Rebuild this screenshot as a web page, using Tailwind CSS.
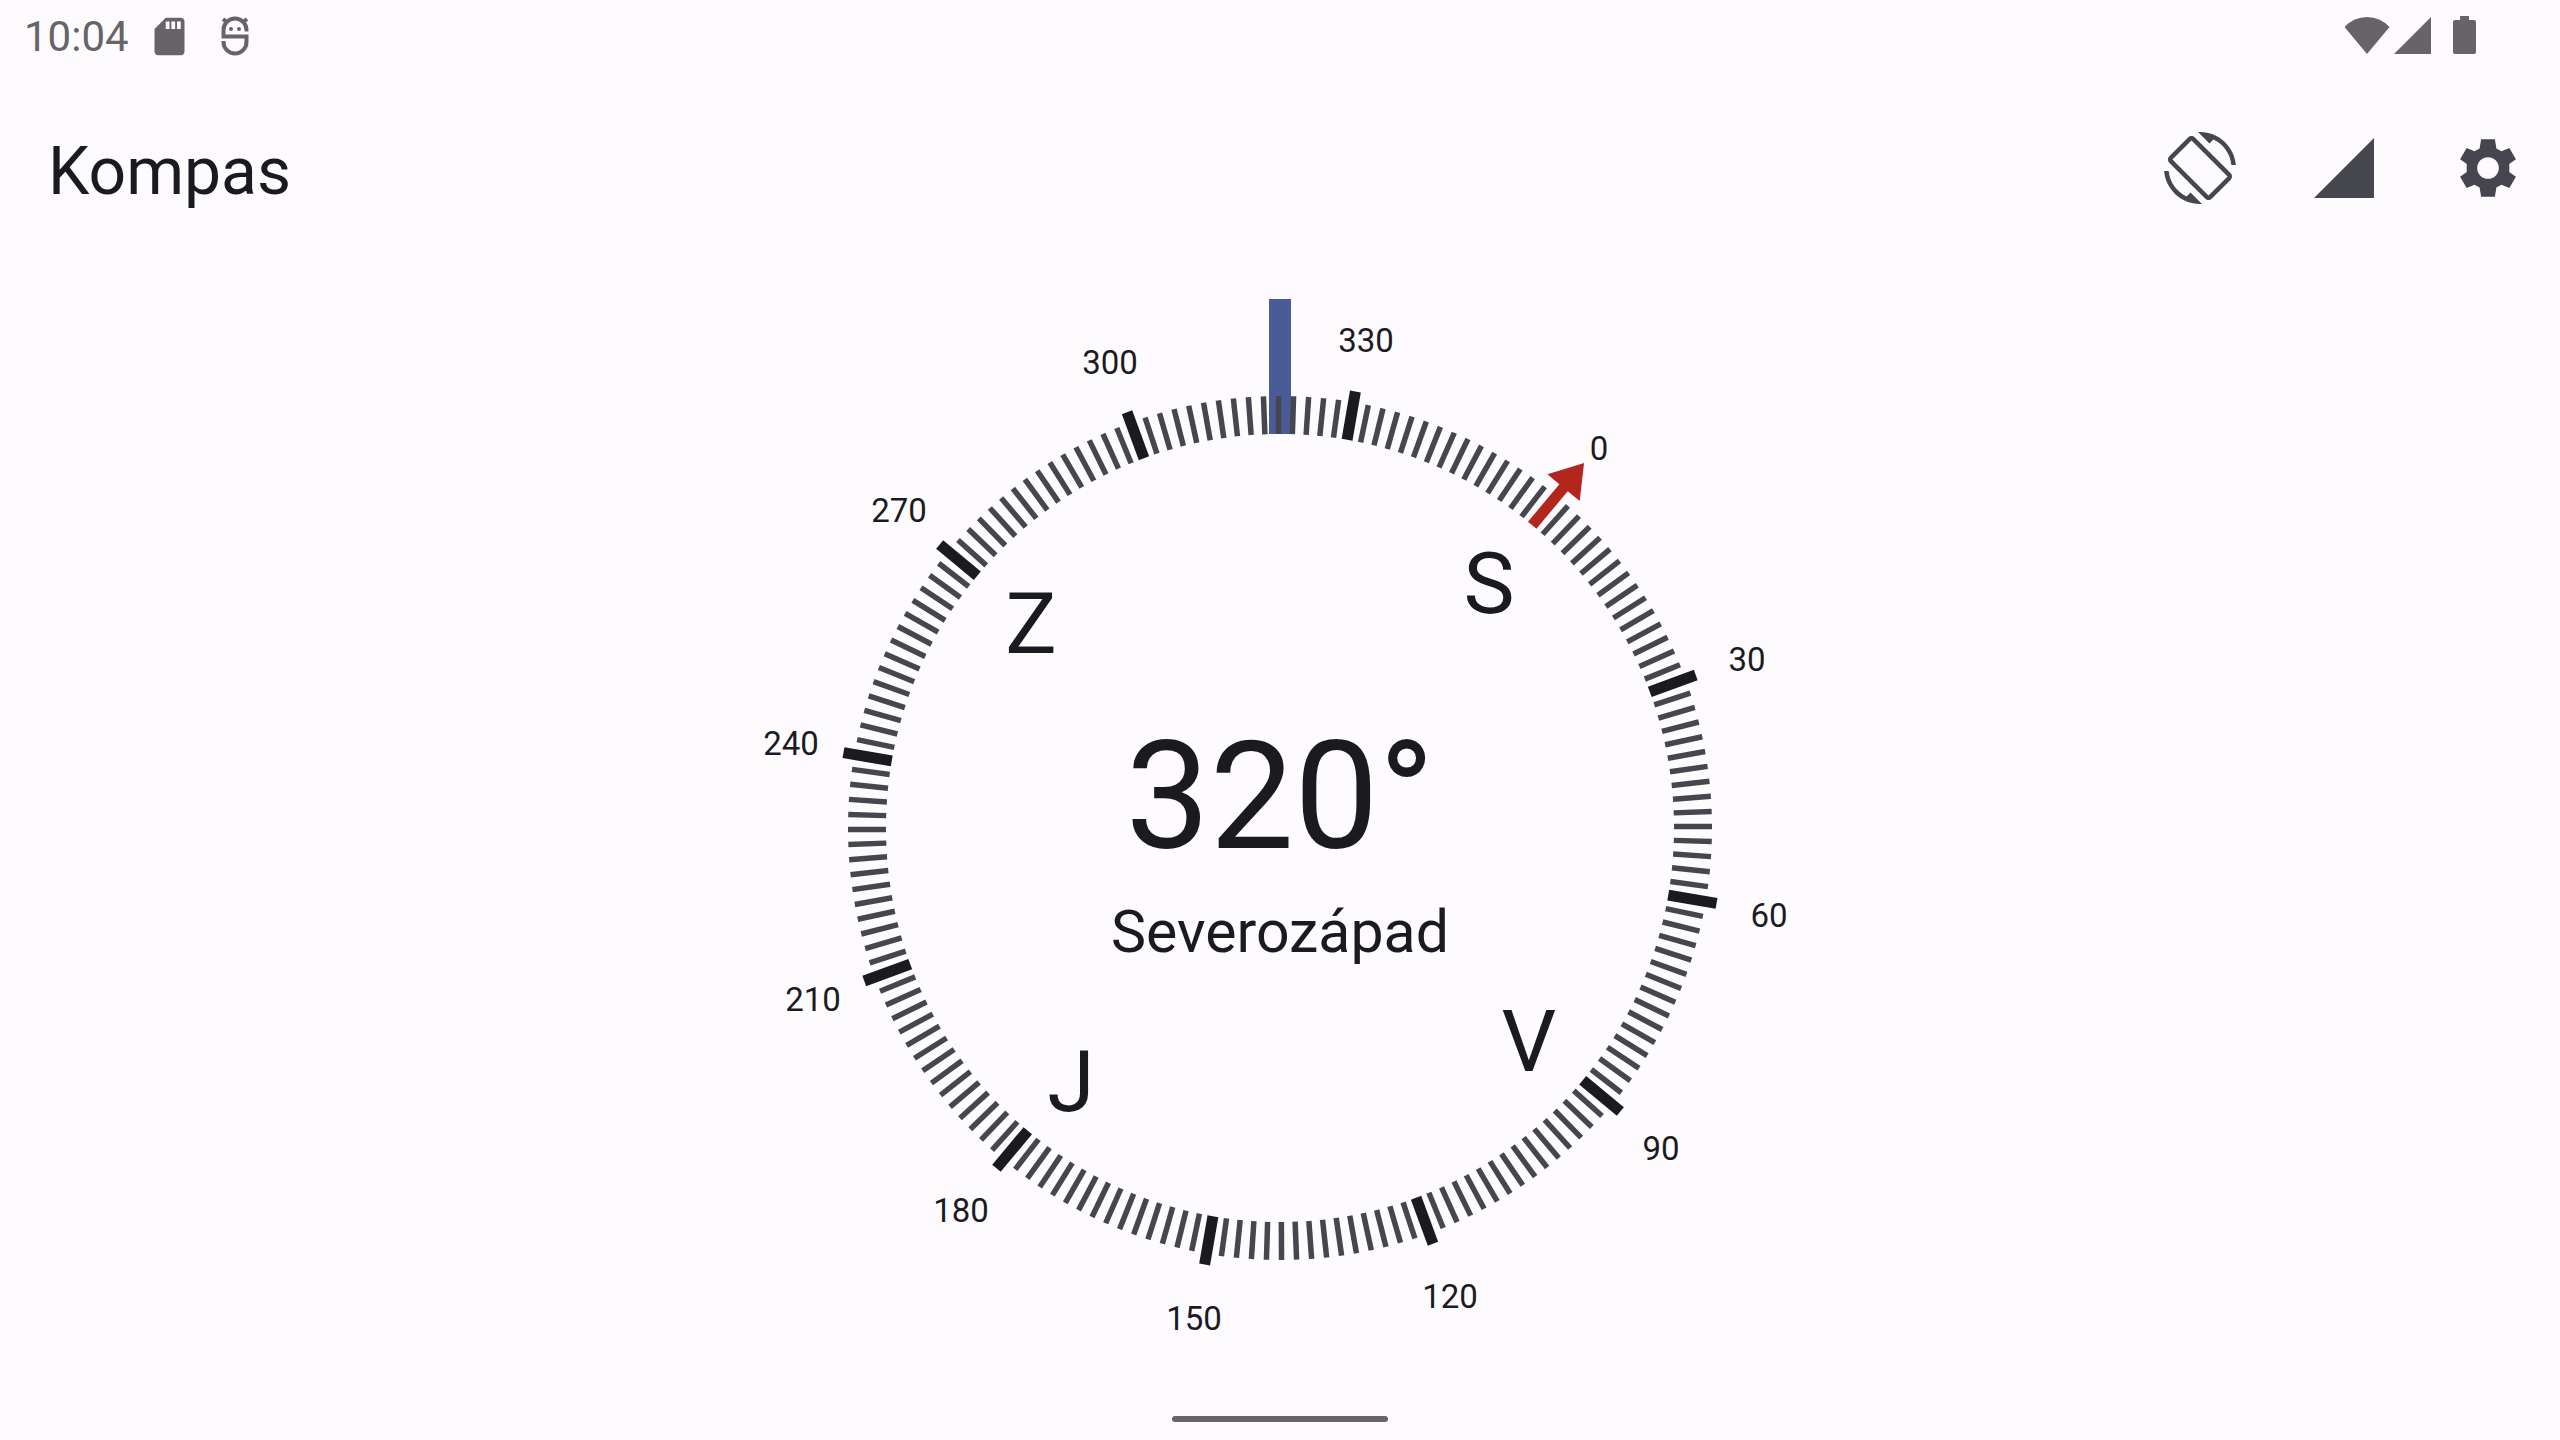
<!DOCTYPE html>
<html lang="cs">
<head>
<meta charset="utf-8">
<meta name="viewport" content="width=device-width, initial-scale=1">
<title>Kompas</title>
<script src="https://cdn.jsdelivr.net/npm/@tailwindcss/browser@4"></script>
</head>
<body class="flex min-h-screen flex-col bg-[#fefbff] font-[Roboto,sans-serif] text-[#1b1b1f]">
  <div class="flex h-[72px] items-center justify-between pr-20 pl-6 text-[#666468]">
    <div class="flex items-center">
      <time class="pt-[2px] text-[42px] leading-[72px]">10:04</time>
      <svg class="ml-[18px] size-[45px]" viewBox="0 0 24 24" fill="currentColor" aria-hidden="true"><path d="M18 2h-8L4.02 8 4 20c0 1.100.9 2 2 2h12c1.100 0 2-.9 2-2V4c0-1.100-.9-2-2-2zm-6 6h-2V4h2v4zm3 0h-2V4h2v4zm3 0h-2V4h2v4z"/></svg>
      <svg class="ml-[29px] h-[40px] w-[28px]" viewBox="0 0 28 40" fill="none" stroke="currentColor" stroke-width="4" aria-hidden="true"><path d="M25.500 15.500V14a11.500 11.500 0 0 0-23 0v6.500h23V26a11.500 11.500 0 0 1-23 0v-1M2 3l5 4M26 3l-5 4"/><circle cx="10" cy="13" r="2" fill="currentColor" stroke="none"/><circle cx="18" cy="13" r="2" fill="currentColor" stroke="none"/></svg>
    </div>
    <div class="flex items-center">
      <svg class="h-10 w-[46px]" viewBox="0 0 46 40" fill="currentColor" aria-hidden="true"><path d="M.5 11Q10 1 23 1t22.500 10L23 38z"/></svg>
      <svg class="ml-1 size-10" viewBox="0 0 40 40" fill="currentColor" aria-hidden="true"><path d="M0 38 37 1v37z"/></svg>
      <svg class="ml-[18px] h-10 w-7" viewBox="0 0 28 40" fill="currentColor" aria-hidden="true"><path d="M8 0h9v4h5q2 0 2 2v30q0 2-2 2H3q-2 0-2-2V6q0-2 2-2h5z"/></svg>
    </div>
  </div>
  <header class="flex h-48 items-center justify-between pr-9 pl-12">
    <h1 class="pt-2 text-[66px] leading-[80px]">Kompas</h1>
    <div class="flex gap-[72px] text-[#46464f]">
      <button type="button" aria-label="Otočení obrazovky"><svg class="size-[72px]" viewBox="0 0 24 24" fill="currentColor"><path d="M16.480 2.520c3.270 1.550 5.610 4.720 5.970 8.480h1.500C23.440 4.840 18.290 0 12 0l-.66.030 3.810 3.810 1.330-1.320zm-6.250-.77c-.59-.59-1.540-.59-2.120 0L1.750 8.110c-.59.59-.59 1.540 0 2.120l12.020 12.020c.59.59 1.540.59 2.120 0l6.360-6.360c.59-.59.59-1.540 0-2.120L10.230 1.750zm4.600 19.440L2.810 9.170l6.360-6.360 12.020 12.020-6.360 6.360zm-7.310.29C4.250 19.940 1.910 16.760 1.550 13H.05C.56 19.160 5.710 24 12 24l.66-.03-3.810-3.810-1.330 1.320z"/></svg></button>
      <button type="button" aria-label="Přesnost senzoru"><svg class="size-[72px]" viewBox="0 0 24 24" fill="currentColor"><path d="M2 22h20V2z"/></svg></button>
      <button type="button" aria-label="Nastavení"><svg class="size-[72px]" viewBox="0 0 24 24" fill="currentColor" fill-rule="evenodd" stroke-linejoin="round"><path d="M9.700 2.400h4.600l.5 3.100 1.700.9 2.600-1.100 2.200 3.750-2.200 1.650v2.600l2.200 1.650-2.200 3.750-2.600-1.100-1.700.9-.5 3.100H9.700l-.5-3.100-1.700-.9-2.600 1.100-2.200-3.750 2.200-1.650v-2.600L2.700 9.050 4.900 5.300l2.600 1.100 1.700-.9zM12 8.400a3.600 3.600 0 1 0 0 7.200 3.600 3.600 0 0 0 0-7.200z"/></svg></button>
    </div>
  </header>
  <main class="flex flex-1 items-start justify-center pt-[34px]">
    <svg class="w-[1060px] max-w-full" viewBox="-530 -530 1060 1060" text-anchor="middle" fill="currentColor" role="img" aria-label="Kompas 320° Severozápad">
      <rect x="-11" y="-529" width="22" height="135" fill="#4b5b98"/>
      <g id="dial"></g>
      <g id="labels"></g>
      <text class="text-[150px]" y="20">320°</text>
      <text class="text-[59px]" y="124">Severozápad</text>
    </svg>
  </main>
  <footer class="flex justify-center pb-[18px]"><div class="h-[6px] w-[216px] rounded-full bg-[#666468]"></div></footer>
  <script>
    const azimuth = 320.2;
    const ns = 'http://www.w3.org/2000/svg';
    const add = (parent, name, attrs, text) => {
      const el = document.createElementNS(ns, name);
      for (const key in attrs) el.setAttribute(key, attrs[key]);
      if (text !== undefined) el.textContent = text;
      document.getElementById(parent).appendChild(el);
    };
    // Labels stay upright and follow the azimuth rounded to a whole degree.
    const place = (deg, radius, size, shift, text) => {
      const a = (deg - Math.round(azimuth)) * Math.PI / 180;
      add('labels', 'text', {
        x: Math.round(Math.sin(a) * radius),
        y: Math.round(-Math.cos(a) * radius + shift),
        'font-size': size
      }, text);
    };
    for (let deg = 0; deg < 360; deg += 2) {
      const transform = `rotate(${deg - azimuth})`;
      if (deg === 0) add('dial', 'path', { d: 'M-5.5-394V-443H-21L0-475 21-443H5.500V-394z', fill: '#b3261e', transform });
      else if (deg % 30 === 0) add('dial', 'path', { d: 'M0-394V-443', stroke: '#1b1b1f', 'stroke-width': 11, transform });
      else add('dial', 'path', { d: 'M0-394V-432', stroke: '#46464f', 'stroke-width': 5.5, transform });
      if (deg % 30 === 0) place(deg, 497, 33, 13, deg);
    }
    ['S', 'V', 'J', 'Z'].forEach((name, i) => place(i * 90, 325, 86, 34, name));
  </script>
</body>
</html>
